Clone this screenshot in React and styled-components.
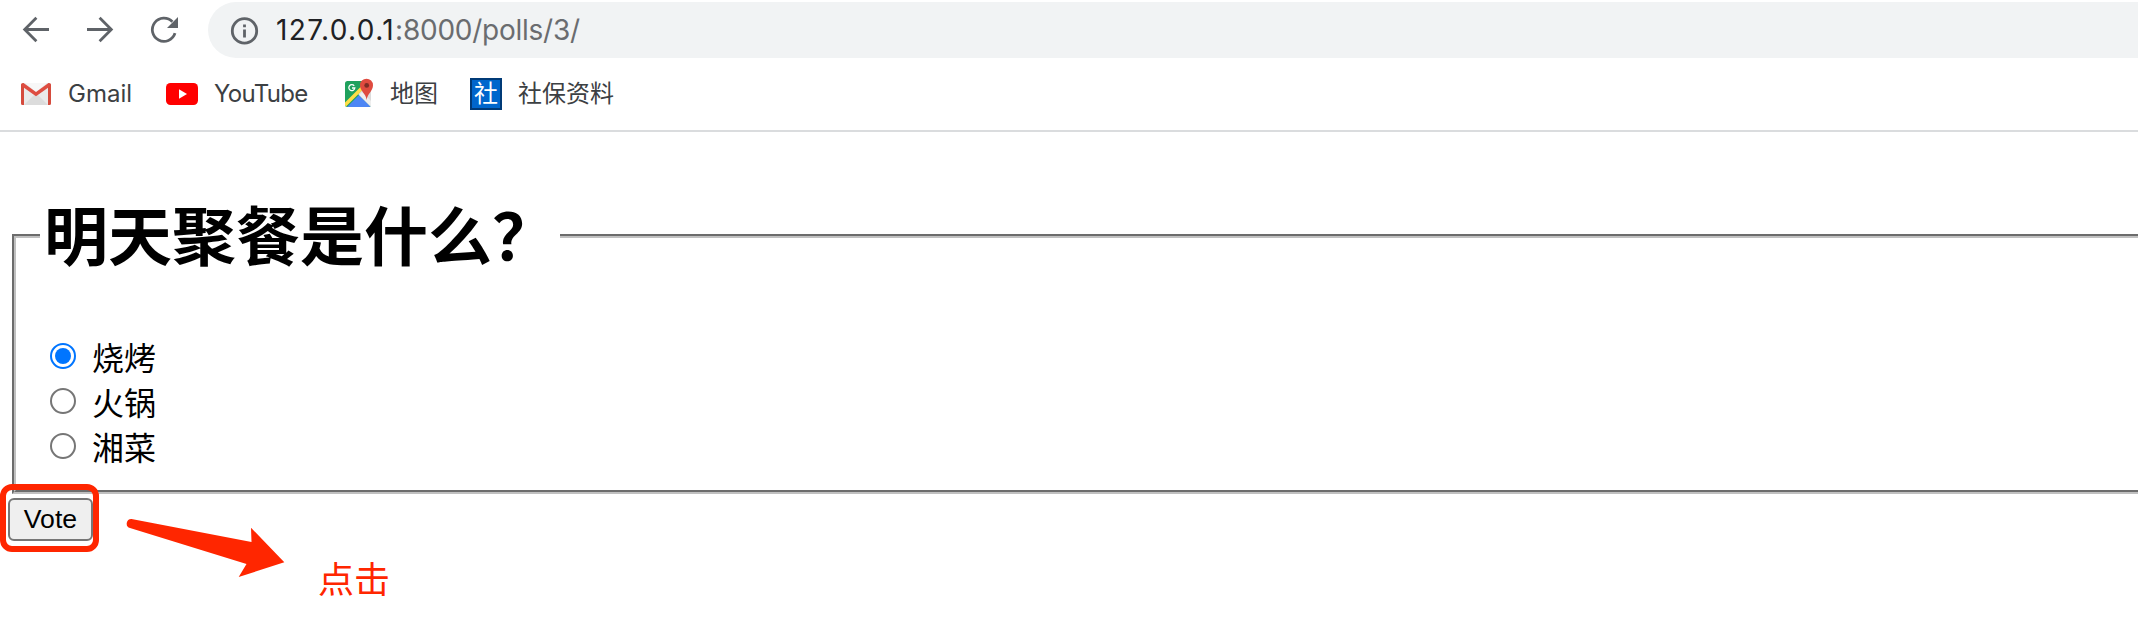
import React, { useState } from "react";
import styled, { createGlobalStyle } from "styled-components";

const GlobalStyle = createGlobalStyle`
  * { box-sizing: border-box; }
  html, body { margin: 0; background: #fff; overflow: hidden; }
`;

const Page = styled.div`
  position: relative;
  width: 100%;
  height: 634px;
  overflow: hidden;
  background: #fff;
`;

const Chrome = styled.header`
  height: 132px;
  border-bottom: 2px solid #dadcde;
  font-family: Inter, "Noto Sans CJK SC", sans-serif;
`;

const Toolbar = styled.div`
  display: flex;
  align-items: center;
  height: 60px;
  padding-left: 20px;
`;

const NavButton = styled.span`
  display: flex;
  width: 32px;
  height: 32px;
  margin-right: 32px;
`;

const AddressBar = styled.div`
  display: flex;
  align-items: center;
  flex: 1;
  height: 56px;
  margin-left: -4px;
  padding-left: 22px;
  border-radius: 28px 0 0 28px;
  background: #f1f3f4;
`;

const Url = styled.span`
  margin-left: 17px;
  font-size: 28px;
  line-height: 56px;
  letter-spacing: -0.25px;
  color: #6a6c6f;
  white-space: pre;
`;

const Host = styled.span`
  letter-spacing: 1.4px;
  color: #202124;
`;

const Bookmarks = styled.nav`
  display: flex;
  align-items: center;
  height: 68px;
  padding-left: 20px;
`;

const Bookmark = styled.a`
  display: flex;
  align-items: center;
  width: ${(p) => p.$width}px;
  gap: ${(p) => p.$gap || 16}px;
  color: #3c4043;
  font-size: 24px;
  line-height: 32px;
  letter-spacing: ${(p) => p.$tracking || "0"};
  white-space: nowrap;

  svg { flex: none; }
`;

const SiteBadge = styled.span`
  display: flex;
  align-items: center;
  justify-content: center;
  flex: none;
  width: 32px;
  height: 32px;
  border: 2px solid #003a77;
  background: #0066cc;
  color: #fff;
  font-size: 24px;
  line-height: 28px;
`;

const Content = styled.main`
  padding: 16px 0 0 12px;
  font-family: "Liberation Serif", "Noto Sans CJK SC", serif;
  font-size: 32px;
  color: #000;
`;

const Poll = styled.fieldset`
  min-width: 0;
  margin: 0 -20px 0 0;
  padding: 11px 24px 20px;
  border: 4px groove #c0c0c0;
`;

const Legend = styled.legend`
  padding: 0 4px;
`;

const Question = styled.h1`
  margin: 43px 0;
  padding-bottom: 8px;
  font-family: "Noto Sans CJK SC", sans-serif;
  font-size: 64px;
  font-weight: 700;
  line-height: 82px;
`;

const Choice = styled.label`
  display: flex;
  align-items: center;
  height: 45px;
  padding: 0 0 3px 10px;
  font-family: "Noto Sans CJK SC", sans-serif;
  line-height: 42px;
`;

const Radio = styled.input`
  appearance: none;
  display: grid;
  place-items: center;
  width: 26px;
  height: 26px;
  margin: 0 16px 1px 0;
  border: 2px solid #767676;
  border-radius: 50%;
  background: #fff;

  &:checked { border-color: #0075ff; }
  &:checked::after {
    content: "";
    width: 16px;
    height: 16px;
    border-radius: 50%;
    background: #0075ff;
  }
`;

const VoteButton = styled.button`
  display: block;
  width: 85px;
  height: 43px;
  margin: 4px 0 0 -4px;
  padding: 0;
  border: 2px solid #767676;
  border-radius: 6px;
  background: #efefef;
  color: #000;
  font-family: "Liberation Sans", Arial, sans-serif;
  font-size: 26.67px;
  line-height: 37px;
`;

const Highlight = styled.div`
  position: absolute;
  left: 0;
  top: 484px;
  width: 99px;
  height: 68px;
  border: 6px solid #ff2600;
  border-radius: 12px;
`;

const Arrow = styled.svg`
  position: absolute;
  left: 120px;
  top: 510px;
`;

const Note = styled.span`
  position: absolute;
  left: 318px;
  top: 551px;
  color: #ff2600;
  font-family: "Noto Sans CJK SC", sans-serif;
  font-size: 36px;
  font-weight: 400;
  line-height: 52px;
`;

const ICON = { fill: "none", stroke: "#5f6368", strokeWidth: 2.8 };

const BackIcon = () => (
  <svg width="32" height="32" viewBox="0 0 32 32" {...ICON}>
    <path d="M29 15.5H5M16.4 3.8L4.7 15.5L16.4 27.2" />
  </svg>
);

const ForwardIcon = () => (
  <svg width="32" height="32" viewBox="0 0 32 32" {...ICON}>
    <path d="M3 15.5H27M15.6 3.8L27.3 15.5L15.6 27.2" />
  </svg>
);

const ReloadIcon = () => (
  <svg width="32" height="32" viewBox="0 0 32 32" {...ICON}>
    <path d="M27 19.2A11.6 11.6 0 1 1 24.4 7.8" />
    <path d="M30 3V14H19Z" fill="#5f6368" stroke="none" />
  </svg>
);

const InfoIcon = () => (
  <svg width="29" height="29" viewBox="0 0 29 29" {...ICON}>
    <circle cx="14.5" cy="14.9" r="12.2" />
    <path d="M14.5 13.5V21.5M14.5 8.4V11.2" />
  </svg>
);

const GmailIcon = () => (
  <svg width="32" height="32" viewBox="0 0 32 32">
    <path d="M3 5H29V27H3Z" fill="#eaeaea" />
    <path d="M4 27L16 15L28 27Z" fill="#dcdcdc" />
    <path d="M5 5H27L16 14Z" fill="#f7f7f7" />
    <path d="M1 6.5Q1 5 3 5L4 5.5V27H2.5Q1 27 1 25.5ZM31 6.5Q31 5 29 5L28 5.5V27H29.5Q31 27 31 25.5Z" fill="#d54b3d" />
    <path d="M2.5 6.5L16 16.2L29.5 6.5" fill="none" stroke="#de4d41" strokeWidth="3.4" />
  </svg>
);

const YouTubeIcon = () => (
  <svg width="32" height="32" viewBox="0 0 32 32">
    <rect y="5" width="32" height="22" rx="4.5" fill="#f00" />
    <path d="M13 11.3L21 16L13 20.7Z" fill="#fff" />
  </svg>
);

const MapsIcon = () => (
  <svg width="32" height="32" viewBox="0 0 32 32">
    <defs>
      <clipPath id="sheet"><rect x="2" y="3" width="26" height="26" rx="2.5" /></clipPath>
    </defs>
    <g clipPath="url(#sheet)">
      <rect x="2" y="3" width="26" height="26" fill="#1fa15d" />
      <path d="M28 3V29L15 16Z" fill="#dcdcdc" />
      <path d="M4 29L16 17L28 29Z" fill="#4d86f4" />
      <path d="M16 17L19 14L31 26L28 29Z" fill="#eeeeee" />
      <path d="M0 29L20 9" stroke="#ffde48" strokeWidth="3.5" />
    </g>
    <path d="M11.2 7.8A3 3 0 1 0 11.8 10H9" fill="none" stroke="#fff" strokeWidth="1.3" />
    <path d="M23.7 22C23 15.5 17 13 17 7.2A6.5 6.5 0 0 1 30 7.2C30 13 24.4 15.5 23.7 22Z" fill="#df4b3f" />
    <circle cx="23.7" cy="7.4" r="2.4" fill="#7d2d25" />
  </svg>
);

const CHOICES = ["烧烤", "火锅", "湘菜"];

export default function App() {
  const [selected, setSelected] = useState(0);
  return (
    <Page>
      <GlobalStyle />
      <Chrome>
        <Toolbar>
          <NavButton><BackIcon /></NavButton>
          <NavButton><ForwardIcon /></NavButton>
          <NavButton><ReloadIcon /></NavButton>
          <AddressBar>
            <InfoIcon />
            <Url><Host>127.0.0.1</Host>:8000/polls/3/</Url>
          </AddressBar>
        </Toolbar>
        <Bookmarks>
          <Bookmark $width={146}><GmailIcon />Gmail</Bookmark>
          <Bookmark $width={177} $tracking="-0.7px"><YouTubeIcon />YouTube</Bookmark>
          <Bookmark $width={127} $gap={15}><MapsIcon />地图</Bookmark>
          <Bookmark $width={160}><SiteBadge>社</SiteBadge>社保资料</Bookmark>
        </Bookmarks>
      </Chrome>
      <Content>
        <Poll>
          <Legend><Question>明天聚餐是什么？</Question></Legend>
          {CHOICES.map((name, i) => (
            <Choice key={name}>
              <Radio type="radio" name="choice" checked={selected === i} onChange={() => setSelected(i)} />
              {name}
            </Choice>
          ))}
        </Poll>
        <VoteButton type="button">Vote</VoteButton>
      </Content>
      <Highlight />
      <Arrow width="170" height="72" viewBox="120 510 170 72">
        <path d="M131.5 519L251.5 542L251 527.7L284.3 562.3L238.7 577L246.5 564L130 528A4.6 4.6 0 0 1 131.5 519Z" fill="#ff2600" />
      </Arrow>
      <Note>点击</Note>
    </Page>
  );
}
